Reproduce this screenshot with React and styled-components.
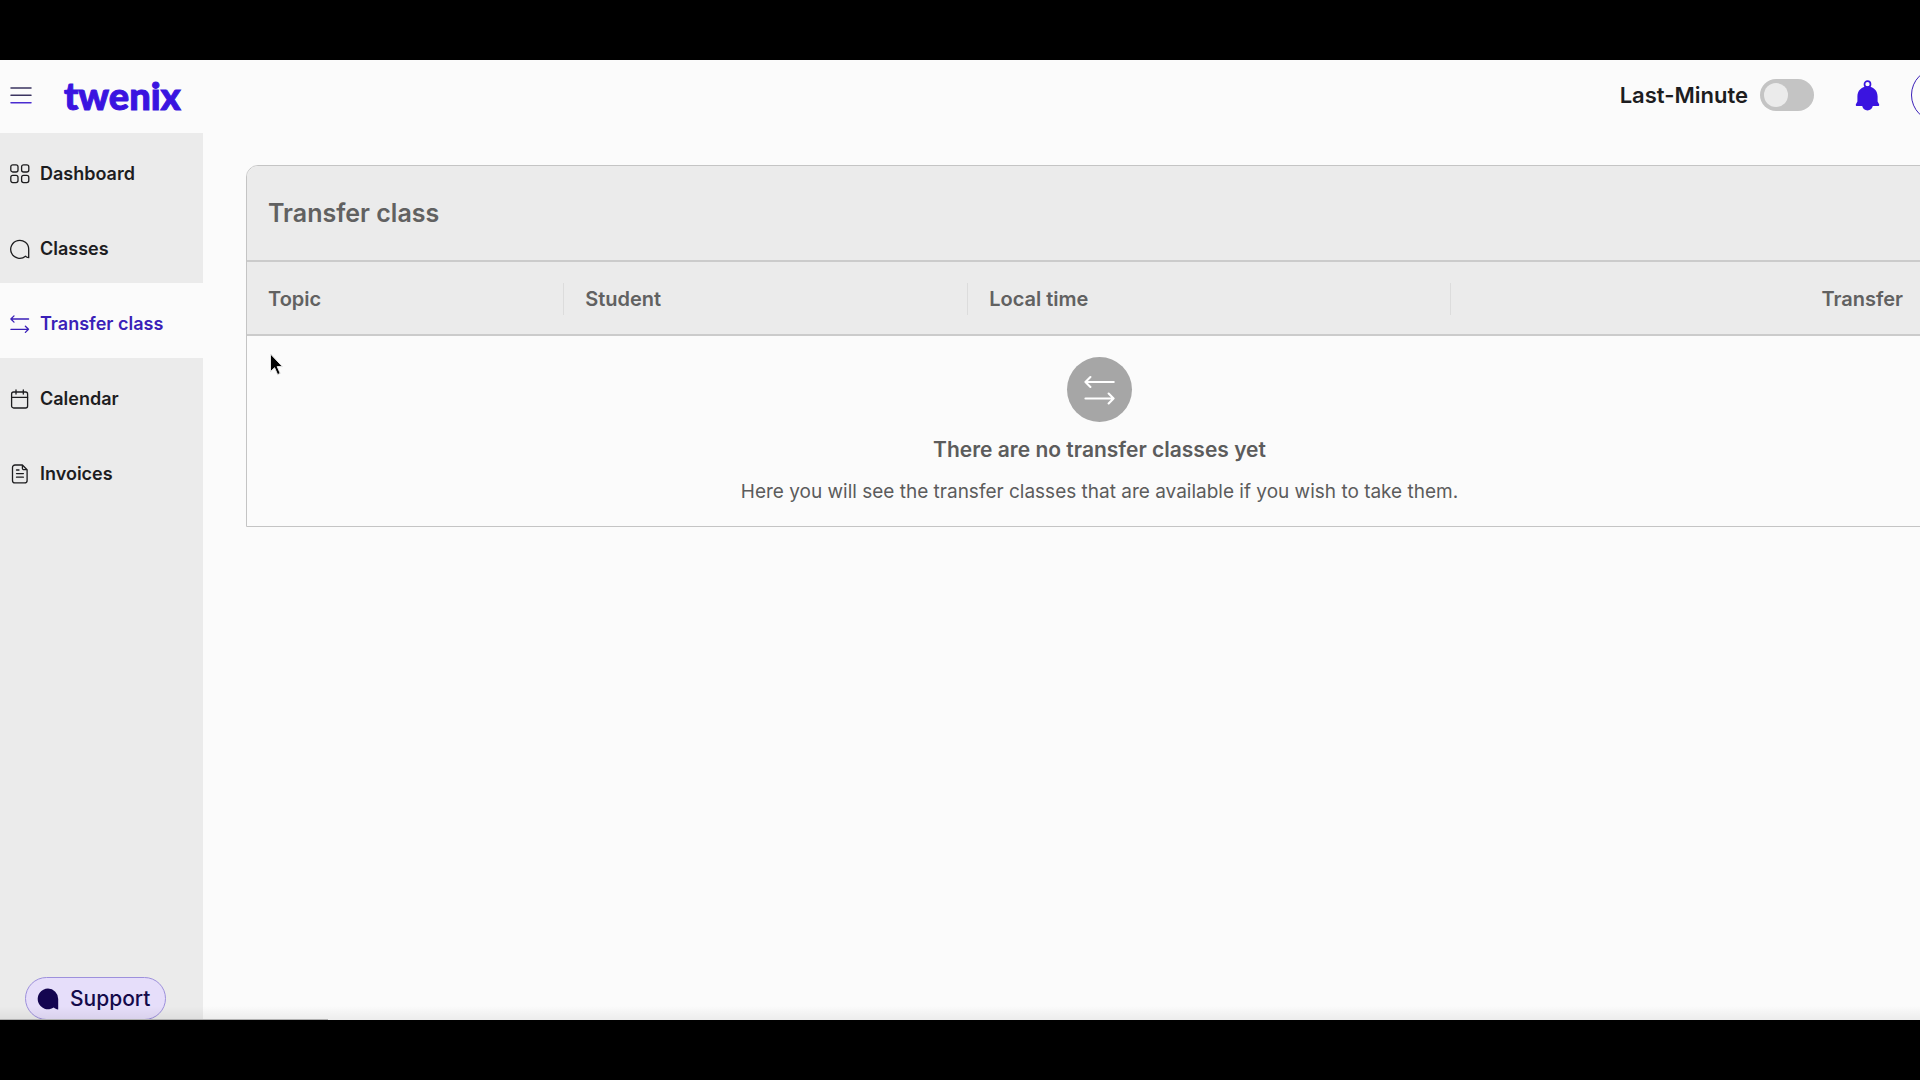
import { useState } from "react";
import styled, { createGlobalStyle } from "styled-components";

const GlobalStyle = createGlobalStyle`
  * {
    box-sizing: border-box;
  }

  body {
    margin: 0;
    background-color: #000;
    font-family: Inter, "Open Sans", sans-serif;
    color: #1d1d1f;
  }
`;

const Page = styled.div`
  height: 100vh;
  padding: 60px 0;
  overflow: hidden;
`;

/* The app is wider than the window, its right edge is cut off */
const Screen = styled.div`
  position: relative;
  display: flex;
  width: calc(100% + 78px);
  height: 100%;
  background-color: #fbfbfb;
`;

const Sidebar = styled.aside`
  display: flex;
  flex-direction: column;
  flex: none;
  width: 203px;
  background-color: #ebebeb;
`;

const Brand = styled.div`
  display: flex;
  align-items: center;
  gap: 32px;
  height: 73px;
  padding: 0 10px 4px;
  background-color: #fbfbfb;
`;

const IconButton = styled.button`
  display: flex;
  padding: 0;
  border: none;
  background: none;
  color: ${(props) => props.$color};
  cursor: pointer;
`;

const Logo = styled.a`
  font-family: Lato, sans-serif;
  font-size: 38px;
  font-weight: 900;
  line-height: 40px;
  color: #3a14e0;
  -webkit-text-stroke: 1px #3a14e0;
  text-decoration: none;
`;

const NavItem = styled.a`
  display: flex;
  align-items: center;
  gap: 10px;
  height: 75px;
  padding: 6px 10px 0;
  font-size: 18px;
  font-weight: 600;
  text-decoration: none;
  color: ${(props) => (props.$active ? "#3a1fb8" : "#1d1d1f")};
  background-color: ${(props) => (props.$active ? "#fbfbfb" : "transparent")};
`;

const SupportButton = styled.button`
  display: flex;
  align-items: center;
  gap: 11px;
  width: 141px;
  height: 43px;
  margin: auto 0 0 25px;
  padding: 0 11px;
  border: 1px solid #9d90dc;
  border-radius: 22px;
  background-color: #e6defa;
  color: #140a4a;
  font-family: inherit;
  font-size: 21px;
  font-weight: 500;
  cursor: pointer;
`;

const Main = styled.main`
  flex: 1;
  min-width: 0;
`;

const TopBar = styled.header`
  display: flex;
  align-items: center;
  justify-content: flex-end;
  height: 72px;
  padding: 0 33px 2px 0;
`;

const SwitchLabel = styled.label`
  display: flex;
  align-items: center;
  gap: 12px;
  margin-right: 41px;
  font-size: 22px;
  font-weight: 600;
`;

const Switch = styled.input`
  appearance: none;
  display: flex;
  align-items: center;
  justify-content: ${(props) => (props.checked ? "flex-end" : "flex-start")};
  width: 54px;
  height: 32px;
  margin: 0;
  padding: 0 4px;
  border-radius: 16px;
  background-color: ${(props) => (props.checked ? "#3a14e0" : "#c4c4c4")};
  cursor: pointer;

  &::before {
    content: "";
    width: 24px;
    height: 24px;
    border-radius: 50%;
    background-color: #ebebeb;
  }
`;

const Avatar = styled.button`
  width: 54px;
  height: 54px;
  margin-left: 31px;
  border: 1px solid #3a1fb8;
  border-radius: 50%;
  background-color: #fbfbfb;
`;

const Card = styled.section`
  margin: 33px 45px 0 43px;
  border: 1px solid #c4c4c4;
  border-radius: 12px 12px 0 0;
  overflow: hidden;
`;

const CardTitle = styled.h1`
  margin: 0;
  padding: 0 21px;
  border-bottom: 2px solid #cbcbcb;
  background-color: #ebebeb;
  color: #616161;
  font-size: 25px;
  font-weight: 600;
  line-height: 94px;
`;

const Table = styled.table`
  width: 100%;
  table-layout: fixed;
  border-collapse: collapse;
`;

const HeadCell = styled.th`
  width: ${(props) => props.$width};
  padding: 21px 0 19px;
  border-bottom: 2px solid #cbcbcb;
  background-color: #ebebeb;
  color: #616161;
  font-size: 20px;
  font-weight: 600;
  text-align: ${(props) => props.$align || "left"};
`;

const HeadText = styled.div`
  padding: 0 ${(props) => (props.$last ? "49px" : "21px")} 0 21px;
  border-right: ${(props) => (props.$last ? "none" : "1px solid #dcdcdc")};
  line-height: 32px;
`;

const EmptyCell = styled.td`
  padding: 21px 0;
  text-align: center;
  color: #5c5c5c;
`;

const EmptyIcon = styled.div`
  display: flex;
  align-items: center;
  justify-content: center;
  width: 65px;
  height: 65px;
  margin: 0 auto;
  border-radius: 50%;
  background-color: #a6a6a6;
  color: #fff;
`;

const EmptyTitle = styled.h2`
  margin: 15px 0 0;
  font-size: 21px;
  font-weight: 600;
  line-height: 26px;
`;

const EmptyText = styled.p`
  margin: 16px 0 0;
  font-size: 19px;
  line-height: 26px;
`;

const BottomShade = styled.div`
  position: absolute;
  left: 0;
  right: 0;
  bottom: 0;
  height: 14px;
  background: linear-gradient(rgba(0, 0, 0, 0), rgba(0, 0, 0, 0.06));
  pointer-events: none;
`;

const StatusEdge = styled.div`
  position: absolute;
  left: 0;
  bottom: 0;
  width: 328px;
  height: 1px;
  background-color: #b0b0b0;
`;

const Pointer = styled.svg`
  position: absolute;
  left: 268px;
  top: 292px;
  pointer-events: none;
`;

const Icon = ({ size = 20, box = 20, stroke = 1.3, children }) => (
  <svg
    width={size}
    height={size}
    viewBox={`0 0 ${box} ${box}`}
    fill="none"
    stroke="currentColor"
    strokeWidth={stroke}
    strokeLinecap="round"
    strokeLinejoin="round"
    aria-hidden="true"
  >
    {children}
  </svg>
);

const DashboardIcon = () => (
  <Icon>
    <rect x="0.8" y="0.8" width="7.2" height="7.2" rx="2" />
    <rect x="11.6" y="0.8" width="7.2" height="7.2" rx="2" />
    <rect x="0.8" y="11.4" width="7.2" height="7.2" rx="2" />
    <rect x="11.6" y="11.4" width="7.2" height="7.2" rx="2" />
  </Icon>
);

const ChatIcon = () => (
  <Icon>
    <path d="M15.5 17.2A9 9 0 1 1 18.7 10.5V18.7C17.6 18.7 16.3 18.2 15.5 17.2Z" />
  </Icon>
);

const TransferIcon = ({ size, stroke }) => (
  <Icon size={size} stroke={stroke}>
    <path d="M18.6 5H1M4 1.9L0.9 5L4 8.1M0.9 15.3H18.5M15.4 12.2L18.5 15.3L15.4 18.4" />
  </Icon>
);

const CalendarIcon = () => (
  <Icon>
    <rect x="1.6" y="3" width="16" height="16" rx="2" />
    <path d="M1.6 8.3H17.6M6 1V5M13.3 1V5" />
  </Icon>
);

const InvoiceIcon = () => (
  <Icon>
    <path d="M12.4 1H5A2.5 2.5 0 0 0 2.5 3.5V16.4A2.5 2.5 0 0 0 5 18.9H14.6A2.5 2.5 0 0 0 17.1 16.4V5.7ZM12.4 1V4.2A1.5 1.5 0 0 0 13.9 5.7H17.1M6.5 6H9M6.5 9.6H13.4M6.5 13.2H13.4" />
  </Icon>
);

const navItems = [
  { label: "Dashboard", icon: DashboardIcon },
  { label: "Classes", icon: ChatIcon },
  { label: "Transfer class", icon: TransferIcon },
  { label: "Calendar", icon: CalendarIcon },
  { label: "Invoices", icon: InvoiceIcon },
];

function App() {
  const [active, setActive] = useState("Transfer class");
  const [lastMinute, setLastMinute] = useState(false);

  return (
    <>
      <GlobalStyle />
      <Page>
        <Screen>
          <Sidebar>
            <Brand>
              <IconButton $color="#3b3460" aria-label="Menu">
                <svg width="22" height="18" viewBox="0 0 22 18" fill="none">
                  <path
                    d="M1 2H21M1 9.3H21"
                    stroke="currentColor"
                    strokeWidth="1.5"
                    strokeLinecap="round"
                  />
                  <path
                    d="M1 16.7H21"
                    stroke="#4a2cd0"
                    strokeWidth="1.5"
                    strokeLinecap="round"
                  />
                </svg>
              </IconButton>
              <Logo href="#">twenix</Logo>
            </Brand>
            <nav>
              {navItems.map(({ label, icon: NavIcon }) => (
                <NavItem
                  key={label}
                  href="#"
                  $active={label === active}
                  onClick={() => setActive(label)}
                >
                  <NavIcon />
                  {label}
                </NavItem>
              ))}
            </nav>
            <SupportButton>
              <svg width="22" height="22" viewBox="0 0 22 22" aria-hidden="true">
                <path
                  d="M11 0.5A10.4 10.4 0 1 0 16.8 19.6C18 20.9 19.7 21.5 21.2 21.4V11A10.4 10.4 0 0 0 11 0.5Z"
                  fill="#140550"
                />
              </svg>
              Support
            </SupportButton>
          </Sidebar>

          <Main>
            <TopBar>
              <SwitchLabel>
                Last-Minute
                <Switch
                  type="checkbox"
                  checked={lastMinute}
                  onChange={(event) => setLastMinute(event.target.checked)}
                />
              </SwitchLabel>
              <IconButton $color="#3a14e0" aria-label="Notifications">
                <svg width="25" height="31" viewBox="0 0 25 31">
                  <circle
                    cx="12.5"
                    cy="4.2"
                    r="3"
                    fill="none"
                    stroke="currentColor"
                    strokeWidth="1.7"
                  />
                  <path
                    d="M12.5 6.6C6.2 6.6 2.4 11 2.4 16.5V21.5L0.9 24.2C0.5 25.3 1 26 2 26H7.2C8 28.9 9.8 30.4 12.5 30.4S17 28.9 17.8 26H23C24 26 24.5 25.3 24.1 24.2L22.6 21.5V16.5C22.6 11 18.8 6.6 12.5 6.6Z"
                    fill="currentColor"
                  />
                </svg>
              </IconButton>
              <Avatar aria-label="Profile" />
            </TopBar>

            <Card>
              <CardTitle>Transfer class</CardTitle>
              <Table>
                <thead>
                  <tr>
                    <HeadCell $width="18.6%">
                      <HeadText>Topic</HeadText>
                    </HeadCell>
                    <HeadCell $width="23.7%">
                      <HeadText>Student</HeadText>
                    </HeadCell>
                    <HeadCell $width="28.3%">
                      <HeadText>Local time</HeadText>
                    </HeadCell>
                    <HeadCell $align="right">
                      <HeadText $last>Transfer</HeadText>
                    </HeadCell>
                  </tr>
                </thead>
                <tbody>
                  <tr>
                    <EmptyCell colSpan={4}>
                      <EmptyIcon>
                        <TransferIcon size={32} stroke={1.3} />
                      </EmptyIcon>
                      <EmptyTitle>There are no transfer classes yet</EmptyTitle>
                      <EmptyText>
                        Here you will see the transfer classes that are available
                        if you wish to take them.
                      </EmptyText>
                    </EmptyCell>
                  </tr>
                </tbody>
              </Table>
            </Card>
          </Main>

          <BottomShade />
          <StatusEdge />
          <Pointer width="18" height="26" viewBox="0 0 18 26">
            <path
              d="M2.5 2V19.5L6.6 15.7L9.6 22.6L12.2 21.4L9.2 14.6H14.4Z"
              fill="#000"
              stroke="#e4e4e4"
              strokeWidth="1"
            />
          </Pointer>
        </Screen>
      </Page>
    </>
  );
}

export default App;
